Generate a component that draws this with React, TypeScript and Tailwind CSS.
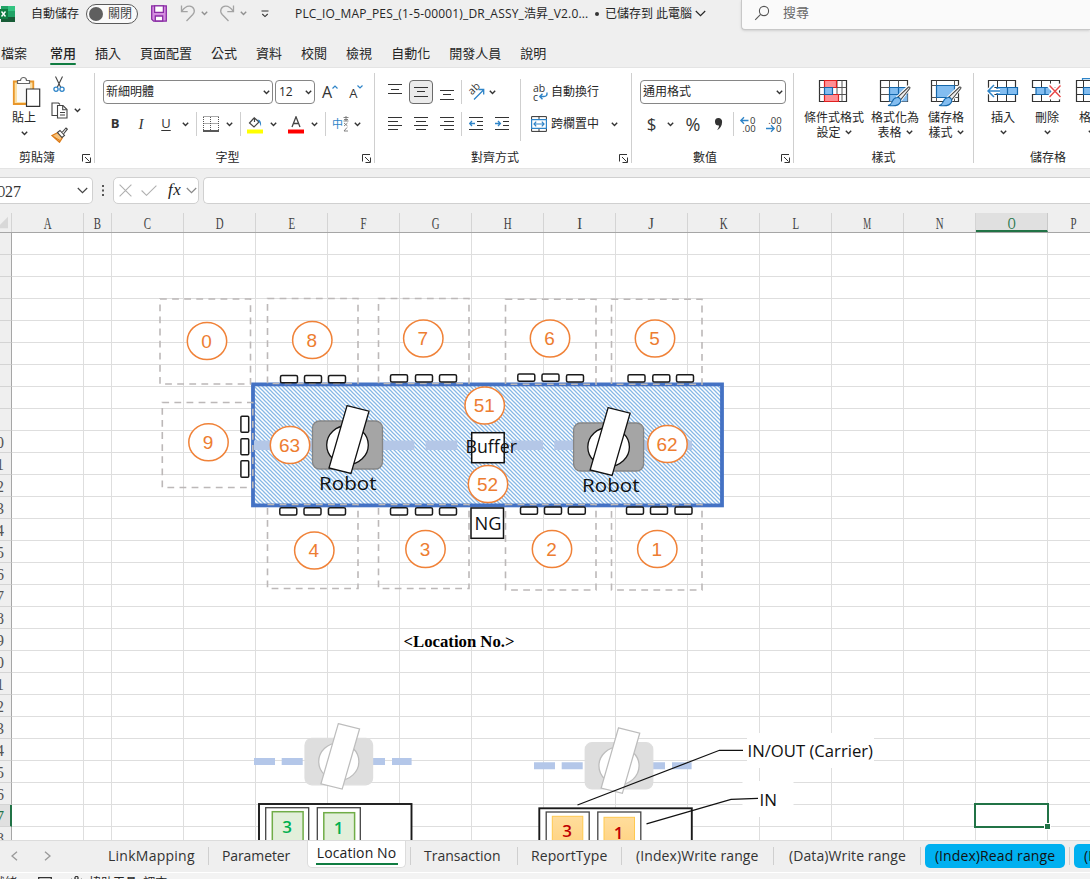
import React from "react";

type P = { className?: string };

const Chevron = ({ className = "" }: P) => (
  <svg className={`h-[5px] w-[7px] shrink-0 ${className}`} viewBox="0 0 7 5" fill="none" stroke="#333" strokeWidth="1.4">
    <path d="M.8 .8 3.5 3.5 6.2 .8" />
  </svg>
);

const WideChevron = ({ className = "" }: P) => (
  <svg className={`h-[7px] w-[11px] shrink-0 ${className}`} viewBox="0 0 11 7" fill="none" stroke="currentColor" strokeWidth="1.2">
    <path d="M.8 1 5.5 5.7 10.2 1" />
  </svg>
);

const Launcher = ({ className = "" }: P) => (
  <svg className={`h-[9px] w-[9px] shrink-0 ${className}`} viewBox="0 0 9 9" fill="none" stroke="#333">
    <path d="M.5 7.5V.5H8M3 3l4.5 4.5M8.5 3.5v5H3.5" />
  </svg>
);

const Divider = ({ className = "" }: P) => <div className={`w-px shrink-0 bg-[#cfcfcf] ${className}`} />;

/* ---------- title bar ---------- */

function TitleBar() {
  return (
    <div className="flex h-[33px] shrink-0 items-start">
      <div className="flex h-[27px] w-[741px] shrink-0 items-center">
        <svg className="h-[16px] w-[16px] shrink-0" viewBox="0 0 16 16">
          <path d="M1 0h14v16H1z" fill="#21a366" />
          <path d="M8 0h7v5H8z" fill="#33c481" />
          <path d="M1 11h14v5H1z" fill="#185c37" />
          <path d="M1 6h7v5H1z" fill="#107c41" />
          <path d="M0 3h8v10H0z" fill="#107c41" />
          <path d="M1.5 5.5l4 5M5.5 5.5l-4 5" stroke="#fff" strokeWidth="1.4" />
        </svg>
        <span className="ml-[15px] w-[48px] shrink-0 text-[12px]">自動儲存</span>
        <div className="ml-[7px] flex h-[20px] w-[52px] shrink-0 items-center rounded-full border border-[#5a5a5a] bg-[#fafafa]">
          <span className="ml-[2px] h-[14px] w-[14px] shrink-0 rounded-full bg-[#5f5f5f]" />
          <span className="ml-[5px] text-[12px] leading-none whitespace-nowrap text-[#444]">關閉</span>
        </div>
        <svg className="ml-[13px] h-[17px] w-[16px] shrink-0" viewBox="0 0 16 17" fill="#d58ee0" stroke="#8a2da5" strokeWidth="1.3">
          <path d="M.7 .9h14.6v15.2H2.6L.7 14.2z" />
          <path d="M3.6 .9h8.8v6.4H3.6z" fill="#fff" />
          <path d="M4.3 16v-5h7.4v5z" fill="#fff" />
        </svg>
        <svg className="ml-[13px] h-[17px] w-[16px] shrink-0" viewBox="0 0 16 17" fill="none" stroke="#a3a3a3" strokeWidth="1.3">
          <path d="M1.5 .5v6.2h6.2M1.8 6.4C4 3 6.5 1 9.5 1.2c4.5.3 6.3 5 3.3 8.300L6.5 16" />
        </svg>
        <Chevron className="ml-[5px] opacity-50" />
        <svg className="ml-[11px] h-[17px] w-[16px] shrink-0" viewBox="0 0 16 17" fill="none" stroke="#a3a3a3" strokeWidth="1.3">
          <path d="M14.5 .5v6.2H8.3M14.2 6.4C12 3 9.5 1 6.5 1.200 2 1.500.2 6.200 3.200 9.500L9.500 16" />
        </svg>
        <Chevron className="ml-[5px] opacity-50" />
        <svg className="ml-[14px] h-[8px] w-[8px] shrink-0" viewBox="0 0 8 8" fill="none" stroke="#333" strokeWidth="1.1">
          <path d="M.5 1h7M1.300 4 4 6.600l2.700-2.600" />
        </svg>
        <span className="ml-[26px] w-[294px] shrink-0 text-[12px] tracking-[0.17px] whitespace-nowrap">PLC_IO_MAP_PES_(1-5-00001)_DR_ASSY_浩昇_V2.0...</span>
        <span className="ml-[6px] h-[4px] w-[4px] shrink-0 rounded-full bg-[#333]" />
        <span className="ml-[6px] w-[48px] shrink-0 text-[12px]">已儲存到</span>
        <span className="ml-[3px] w-[36px] shrink-0 text-[12px]">此電腦</span>
        <WideChevron className="ml-[3px]" />
      </div>
      <div className="flex h-[30px] grow items-center rounded-bl-[4px] border-b border-l border-[#c8c8c8] bg-[#fafafa] shadow-sm">
        <svg className="mt-[-3px] ml-[12px] h-[16px] w-[16px]" viewBox="0 0 16 16" fill="none" stroke="#555" strokeWidth="1.1">
          <circle cx="10" cy="6" r="4.600" />
          <path d="M6.600 9.300 1.200 14.800" />
        </svg>
        <span className="mt-[-3px] ml-[13px] text-[13px] text-[#666]">搜尋</span>
      </div>
    </div>
  );
}

/* ---------- ribbon tabs ---------- */

const ribbonTabs = ["插入", "頁面配置", "公式", "資料", "校閱", "檢視", "自動化", "開發人員", "說明"];

function RibbonTabs() {
  return (
    <div className="flex h-[34px] shrink-0 items-start gap-[19px] pt-[11px] text-[13px] leading-[18px]">
      <span className="ml-[1px]">檔案</span>
      <span className="ml-[4px] flex flex-col font-medium">
        常用
        <span className="mt-px h-[2px] rounded bg-[#107c41]" />
      </span>
      {ribbonTabs.map((t) => (
        <span key={t}>{t}</span>
      ))}
    </div>
  );
}

/* ---------- ribbon groups ---------- */

function GroupLabel({ label, launcher = true, pad = "" }: { label: string; launcher?: boolean; pad?: string }) {
  return (
    <div className="mt-auto flex h-[21px] items-center">
      <span className={`grow text-center text-[12px] leading-[16px] ${pad}`}>{label}</span>
      {launcher && <Launcher className="mt-[2px] mr-[3px]" />}
    </div>
  );
}

function ClipboardGroup() {
  return (
    <div className="flex h-[100px] w-[94px] shrink-0 flex-col">
      <div className="flex">
        <div className="ml-[12px] flex w-[29px] flex-col pt-[8px]">
          <svg className="h-[32px] w-[29px]" viewBox="0 0 29 32">
            <path d="M1.800 5.500h19.500V28H1.800z" fill="#fbe0a6" stroke="#e8962a" strokeWidth="1.800" />
            <path d="M5 8h13v18H5z" fill="#fafafa" />
            <path d="M5.500 7.500V4.500h3a3 3 0 0 1 6 0h3v3z" fill="#fff" stroke="#666" strokeWidth="1.200" />
            <path d="M14.500 13h13.200v17.300H14.500z" fill="#fff" stroke="#333" strokeWidth="1.200" />
          </svg>
          <span className="mt-[2px] text-[12px] leading-[16px]">貼上</span>
          <Chevron className="mt-[5px] ml-[9px]" />
        </div>
        <div className="ml-[9px] flex w-[18px] flex-col items-center pt-[8px]">
          <svg className="h-[17px] w-[12px]" viewBox="0 0 12 17" fill="none">
            <path d="M2.500 .5 7.800 11.500M9.500 .5 4.200 11.500" stroke="#444" strokeWidth="1.100" />
            <circle cx="3" cy="13.300" r="2.100" stroke="#2e84c8" strokeWidth="1.300" />
            <circle cx="9" cy="13.300" r="2.100" stroke="#2e84c8" strokeWidth="1.300" />
          </svg>
          <svg className="mt-[9px] h-[17px] w-[17px]" viewBox="0 0 17 17" fill="#fff" stroke="#444" strokeWidth="1.100">
            <path d="M6 13.500H1V1h6.500l1.500 1.500" />
            <path d="M6.500 3.500h5.500l4 4V16H6.500z" />
            <path d="M11.700 3.700v4h4M9 10.500h5M9 13h5" fill="none" />
          </svg>
          <svg className="mt-[8px] h-[16px] w-[17px]" viewBox="0 0 17 16">
            <path d="M1 8.500 7 5.500l4.500 5L8.500 15.300z" fill="#f7c27a" stroke="#dc7a17" strokeWidth="1.200" />
            <path d="M3 10l6 3.500" stroke="#dc7a17" />
            <path d="M6.500 5.500 9 3.500l4.500 5-2.500 2z" fill="#fff" stroke="#444" strokeWidth="1.100" />
            <path d="M11 5.500 15 1l1.300 1.200L12.500 7" fill="#fff" stroke="#444" strokeWidth="1.100" />
          </svg>
        </div>
        <Chevron className="mt-[40px] ml-[6px]" />
      </div>
      <GroupLabel label="剪貼簿" pad="pr-[8px]" />
    </div>
  );
}

function FontGroup() {
  return (
    <div className="flex h-[100px] w-[279px] shrink-0 flex-col">
      <div className="mt-[12px] flex h-[24px] items-center">
        <div className="ml-[8px] flex h-[24px] w-[170px] items-center rounded-[4px] border border-[#868686] px-[2px] text-[12px]">
          <span className="grow">新細明體</span>
          <Chevron />
        </div>
        <div className="ml-[2px] flex h-[24px] w-[40px] items-center rounded-[4px] border border-[#868686] pr-[2px] pl-[3px] text-[12px]">
          <span className="grow">12</span>
          <Chevron />
        </div>
        <span className="ml-[7px] text-[16px] leading-none text-[#333]">A</span>
        <svg className="mt-[-11px] h-[4px] w-[6px]" viewBox="0 0 6 4" fill="none" stroke="#2e84c8" strokeWidth="1.200">
          <path d="M.5 3.500 3 1l2.500 2.500" />
        </svg>
        <span className="mt-[2px] ml-[11px] text-[13px] leading-none text-[#333]">A</span>
        <svg className="mt-[-11px] h-[4px] w-[6px]" viewBox="0 0 6 4" fill="none" stroke="#2e84c8" strokeWidth="1.200">
          <path d="M.5 .5 3 3 5.500 .5" />
        </svg>
      </div>
      <div className="mt-[8px] flex h-[24px] items-center text-[#333]">
        <span className="ml-[13px] w-[14px] text-center text-[13px] font-bold">B</span>
        <span className="ml-[12px] w-[14px] text-center font-['Liberation_Serif'] text-[15px] italic">I</span>
        <span className="ml-[11px] w-[14px] text-center text-[13px] underline underline-offset-2">U</span>
        <Chevron className="ml-[9px]" />
        <Divider className="ml-[7px] h-[24px]" />
        <svg className="ml-[6px] h-[16px] w-[16px]" viewBox="0 0 16 16" fill="none" stroke="#555">
          <path d="M.5 .5h15M.5 7.500h15M.5 1v14M7.500 1v14M15.500 1v14" strokeDasharray="1 1" />
          <path d="M0 15h16" stroke="#222" strokeWidth="1.500" />
        </svg>
        <Chevron className="ml-[7px]" />
        <Divider className="ml-[7px] h-[24px]" />
        <svg className="mt-[2px] ml-[6px] h-[18px] w-[16px]" viewBox="0 0 16 18" fill="none">
          <path d="M7 2 2.500 7 7 11l5-5L7.500 2v4" stroke="#444" strokeWidth="1.200" />
          <path d="M10.500 3.500c3 0 4 3 3.500 7-1-2-1-3.500-2-4.500z" fill="#2e84c8" />
          <path d="M0 13.500h16v4H0z" fill="#ffff00" />
        </svg>
        <Chevron className="ml-[7px]" />
        <svg className="mt-[2px] ml-[11px] h-[18px] w-[16px]" viewBox="0 0 16 18">
          <path d="M4 11 8 .8l4 10.200M5.300 7.500h5.400" fill="none" stroke="#444" strokeWidth="1.300" />
          <path d="M0 13.500h16v4H0z" fill="#f00" />
        </svg>
        <Chevron className="ml-[7px]" />
        <Divider className="ml-[7px] h-[24px]" />
        <span className="ml-[6px] w-[11px] text-[11px] text-[#2e84c8]">中</span>
        <svg className="h-[16px] w-[6px]" viewBox="0 0 6 16" fill="none" stroke="#777" strokeWidth=".9">
          <path d="M.5 1.500h5M1 3.500h4M3 0v5M.5 5h5M1 7l3.500 3M4.500 7 1 10M4 11.500l-3 3.500h4" />
        </svg>
        <Chevron className="ml-[5px]" />
      </div>
      <GroupLabel label="字型" pad="pr-[2px]" />
    </div>
  );
}

const Lines = ({ d, className = "" }: { d: string; className?: string }) => (
  <svg className={`h-[16px] w-[14px] shrink-0 ${className}`} viewBox="0 0 14 16" fill="none" stroke="#333" strokeWidth="1.1">
    <path d={d} />
  </svg>
);

function AlignGroup() {
  return (
    <div className="flex h-[100px] w-[256px] shrink-0 flex-col">
      <div className="flex">
        <div className="flex w-[145px] flex-col pt-[12px]">
          <div className="flex h-[24px] items-center">
            <Lines className="ml-[13px]" d="M0 .5h14M3 5.500h8M0 9.500h14" />
            <div className="ml-[7px] flex h-[24px] w-[24px] items-center justify-center rounded-[4px] border border-[#6b6b6b] bg-[#ebebeb]">
              <Lines d="M0 3.500h14M3 7.500h8M0 12.500h14" />
            </div>
            <Lines className="ml-[7px]" d="M0 6.500h14M3 10.500h8M0 15.500h14" />
            <Divider className="ml-[7px] h-[24px]" />
            <svg className="ml-[6px] h-[17px] w-[17px] overflow-visible" viewBox="0 0 17 17" fill="none">
              <text x="4" y="11.500" transform="rotate(-45 4 11.500)" fontSize="10.500" fontFamily="Open Sans" fill="#333">ab</text>
              <path d="M6 15.500 15.500 6M10.500 5.500h5.200v5" stroke="#2e84c8" strokeWidth="1.300" />
            </svg>
            <Chevron className="ml-[4px]" />
          </div>
          <div className="mt-[8px] flex h-[24px] items-center">
            <Lines className="ml-[13px]" d="M0 1.500h14M0 5.500h10M0 9.500h14M0 13.500h10" />
            <Lines className="ml-[12px]" d="M0 1.500h14M2 5.500h10M0 9.500h14M2 13.500h10" />
            <Lines className="ml-[12px]" d="M0 1.500h14M4 5.500h10M0 9.500h14M4 13.500h10" />
            <Divider className="ml-[7px] h-[24px]" />
            <svg className="ml-[7px] h-[16px] w-[14px]" viewBox="0 0 14 16" fill="none" strokeWidth="1.1">
              <path d="M0 1.500h14M8 5.500h6M8 9.500h6M0 13.500h14" stroke="#333" />
              <path d="M6 7.500H.8M3 5 .6 7.500 3 10" stroke="#2e84c8" strokeWidth="1.300" />
            </svg>
            <svg className="ml-[12px] h-[16px] w-[14px]" viewBox="0 0 14 16" fill="none" strokeWidth="1.1">
              <path d="M0 1.500h14M8 5.500h6M8 9.500h6M0 13.500h14" stroke="#333" />
              <path d="M0 7.500h5.200M3 5l2.400 2.500L3 10" stroke="#2e84c8" strokeWidth="1.300" />
            </svg>
          </div>
        </div>
        <Divider className="mt-[11px] h-[62px]" />
        <div className="flex flex-col pt-[12px]">
          <div className="flex h-[24px] items-center">
            <svg className="ml-[12px] h-[17px] w-[15px] overflow-visible" viewBox="0 0 15 17" fill="none">
              <text x="0" y="8" fontSize="10.500" fontFamily="Open Sans" fill="#333">ab</text>
              <text x="0" y="16.500" fontSize="10.500" fontFamily="Open Sans" fill="#333">c</text>
              <path d="M14 8.500c.3 3-1 4-3 4H7M9.500 9.800 6.800 12.500l2.700 2.700" stroke="#2e84c8" strokeWidth="1.400" />
            </svg>
            <span className="ml-[3px] text-[12px]">自動換行</span>
          </div>
          <div className="mt-[8px] flex h-[24px] items-center">
            <svg className="ml-[10px] h-[16px] w-[16px]" viewBox="0 0 16 16" fill="none" stroke="#333">
              <path d="M.6 .6h14.800v14.800H.6zM8 .6v3M8 12.500v3" />
              <path d="M.6 3.700h14.800v8.600H.6z" stroke="#2e84c8" fill="#fff" strokeWidth="1.200" />
              <path d="M3 8h10M5.200 5.700 3 8l2.200 2.300M10.800 5.700 13 8l-2.200 2.300" stroke="#2e84c8" strokeWidth="1.200" />
            </svg>
            <span className="ml-[4px] w-[48px] text-[12px]">跨欄置中</span>
            <Chevron className="ml-[12px]" />
          </div>
        </div>
      </div>
      <GroupLabel label="對齊方式" pad="pr-[4px]" />
    </div>
  );
}

function NumberGroup() {
  return (
    <div className="flex h-[100px] w-[161px] shrink-0 flex-col">
      <div className="mt-[12px] ml-[8px] flex h-[24px] w-[146px] items-center rounded-[4px] border border-[#868686] px-[2px] text-[12px]">
        <span className="grow">通用格式</span>
        <Chevron />
      </div>
      <div className="mt-[8px] flex h-[24px] items-center text-[#333]">
        <span className="ml-[14px] w-[11px] text-center text-[17px]">$</span>
        <Chevron className="ml-[10px]" />
        <span className="ml-[10px] w-[18px] text-center text-[18px]">%</span>
        <svg className="ml-[12px] h-[14px] w-[9px]" viewBox="0 0 9 14" fill="#333">
          <path d="M4.500 1a3.600 3.600 0 0 1 3.600 4c0 3.800-2.100 6.800-5.300 8.300 1.300-1.500 2.200-3.200 2.200-4.800A3.700 3.700 0 1 1 4.500 1z" />
        </svg>
        <Divider className="ml-[10px] h-[24px]" />
        <svg className="ml-[6px] h-[17px] w-[16px] overflow-visible" viewBox="0 0 16 17" fill="none">
          <text x="10" y="7.500" fontSize="9.500" fontFamily="Open Sans" fill="#333">0</text>
          <text x="2.300" y="16" fontSize="9.500" fontFamily="Open Sans" fill="#333">.00</text>
          <path d="M8.500 4.500H.8M4 1.300.8 4.500 4 7.700" stroke="#2e84c8" strokeWidth="1.300" />
        </svg>
        <svg className="ml-[10px] h-[17px] w-[16px] overflow-visible" viewBox="0 0 16 17" fill="none">
          <text x="2.300" y="7.500" fontSize="9.500" fontFamily="Open Sans" fill="#333">.00</text>
          <text x="10" y="16" fontSize="9.500" fontFamily="Open Sans" fill="#333">0</text>
          <path d="M0 12.500h8M5 9.300l3.200 3.200L5 15.700" stroke="#2e84c8" strokeWidth="1.300" />
        </svg>
      </div>
      <GroupLabel label="數值" pad="pr-[3px]" />
    </div>
  );
}

const Table = ({ children }: { children?: React.ReactNode }) => (
  <svg className="h-[30px] w-[32px]" viewBox="0 0 32 30" fill="none">
    <path d="M1.500 2.500h27v21h-27z" fill="#fff" stroke="#333" strokeWidth="1.200" />
    {children}
  </svg>
);

const Brush = () => (
  <g>
    <path d="M29.500 8.500c1.300-.3 1.800.5 1.200 1.500L21.500 22l-3-2.600z" fill="#fff" stroke="#fff" strokeWidth="3" />
    <path d="M29.500 9c1.300-.3 1.800.5 1.200 1.500L21.500 22l-3-2.600z" fill="#eee" stroke="#444" strokeWidth="1.100" />
    <path d="M18 19.500c2-.5 4.500 1.500 3.500 4.500-1 2.700-5 4.500-12.500 3.500 3.500-.5 3.500-2.500 4.500-4.500.8-1.900 2.500-3.300 4.500-3.500z" fill="#83bdf0" stroke="#1467ab" strokeWidth="1.100" />
  </g>
);

function BigButton({ icon, lines, className = "" }: { icon: React.ReactNode; lines: string[]; className?: string }) {
  return (
    <div className={`flex shrink-0 flex-col items-center pt-[10px] ${className}`}>
      {icon}
      <span className="mt-[2px] text-[12px] leading-[15px] whitespace-nowrap">{lines[0]}</span>
      {lines[1] ? (
        <span className="flex items-center gap-[4px] text-[12px] leading-[15px] whitespace-nowrap">
          {lines[1]}
          <Chevron />
        </span>
      ) : (
        <Chevron className="mt-[5px]" />
      )}
    </div>
  );
}

function StylesGroup() {
  return (
    <div className="flex h-[100px] w-[179px] shrink-0 flex-col">
      <div className="flex">
        <BigButton
          className="ml-[10px] w-[60px]"
          lines={["條件式格式", "設定"]}
          icon={
            <Table>
              <path d="M1.500 9.500h27M1.500 16.500h27M6.500 2.500v21M19 2.500v21M24 2.500v21" stroke="#555" />
              <path d="M6.500 2.500h12v7h-12zM6.500 16.500h14v7h-14z" fill="#ff8f94" stroke="#e02020" strokeWidth="1.200" />
              <path d="M6.500 9.500h8v7h-8z" fill="#83bdf0" stroke="#1467ab" strokeWidth="1.200" />
            </Table>
          }
        />
        <BigButton
          className="ml-[7px] w-[48px]"
          lines={["格式化為", "表格"]}
          icon={
            <Table>
              <path d="M10.500 9.500h18v14h-18z" fill="#83bdf0" />
              <path d="M1.500 9.500h9M1.500 16.500h9M10.500 2.500v7M19.500 2.500v7" stroke="#555" />
              <path d="M10.500 23.500v-14h18M10.500 16.500h18M19.500 9.500v14" stroke="#1467ab" strokeWidth="1.200" />
              <Brush />
            </Table>
          }
        />
        <BigButton
          className="ml-[4px] w-[46px]"
          lines={["儲存格", "樣式"]}
          icon={
            <Table>
              <path d="M1.500 7.500h27M1.500 19.500h27M6.500 2.500v21M24.500 2.500v21" stroke="#555" />
              <path d="M6.500 7.500h18v12h-18z" fill="#83bdf0" stroke="#1467ab" strokeWidth="1.200" />
              <Brush />
            </Table>
          }
        />
      </div>
      <GroupLabel label="樣式" launcher={false} />
    </div>
  );
}

function CellsGroup() {
  return (
    <div className="flex h-[100px] w-[148px] shrink-0 flex-col">
      <div className="flex">
        <BigButton
          className="ml-[13px] w-[32px]"
          lines={["插入"]}
          icon={
            <Table>
              <path d="M1.500 9.500h27M1.500 16.500h27M10.500 2.500v21M19.500 2.500v21" stroke="#333" />
              <path d="M10 9.500h20.500v7H10zM20.500 9.500v7" fill="#83bdf0" stroke="#1467ab" strokeWidth="1.200" />
              <path d="M13 13H1M7 7l-6 6 6 6" stroke="#fff" strokeWidth="4" />
              <path d="M13 13H.8M7 7l-6 6 6 6" stroke="#2e84c8" strokeWidth="1.500" />
            </Table>
          }
        />
        <BigButton
          className="ml-[12px] w-[32px]"
          lines={["刪除"]}
          icon={
            <Table>
              <path d="M1.500 9.500h27M1.500 16.500h27M10.500 2.500v21M19.500 2.500v21" stroke="#333" />
              <path d="M0 10h4v6H0z" fill="#fff" />
              <path d="M5 9.500h15v7H5zM14 9.500v7" fill="#83bdf0" stroke="#1467ab" strokeWidth="1.200" />
              <path d="M18 7l12 13M30 7 18 20" stroke="#fff" strokeWidth="5" />
              <path d="M18.500 7.500 29.500 19M29.500 7.500 18.500 19" stroke="#e84848" strokeWidth="1.400" />
            </Table>
          }
        />
        <BigButton
          className="ml-[12px] w-[32px]"
          lines={["格式"]}
          icon={
            <Table>
              <path d="M1.500 9.500h27M1.500 16.500h27M8.500 2.500v21M19.500 2.500v21" stroke="#333" />
              <path d="M8.500 9.500h11v7h-11z" fill="#83bdf0" stroke="#1467ab" strokeWidth="1.200" />
              <path d="M7.500 0v2M8 .6h14" stroke="#2e84c8" strokeWidth="1.200" />
            </Table>
          }
        />
      </div>
      <GroupLabel label="儲存格" launcher={false} />
    </div>
  );
}

function Ribbon() {
  return (
    <div className="flex h-[102px] shrink-0 overflow-hidden border-t border-b border-[#e4e4e4] bg-white">
      <ClipboardGroup />
      <Divider className="mt-[5px] h-[90px]" />
      <FontGroup />
      <Divider className="mt-[5px] h-[90px]" />
      <AlignGroup />
      <Divider className="mt-[5px] h-[90px]" />
      <NumberGroup />
      <Divider className="mt-[5px] h-[90px]" />
      <StylesGroup />
      <Divider className="mt-[5px] h-[90px]" />
      <CellsGroup />
    </div>
  );
}

/* ---------- formula bar ---------- */

function FormulaBar() {
  return (
    <div className="flex h-[44px] shrink-0 items-start pt-[8px]">
      <div className="flex h-[27px] w-[93px] shrink-0 items-center rounded-r-[5px] border-y border-r border-[#d0d0d0] bg-white">
        <span className="mt-[2px] ml-[-3px] inline-block w-[8px] shrink-0 origin-left scale-x-[0.7] font-['Liberation_Serif'] text-[16px] text-[#333]">O</span>
        <span className="mt-[2px] grow font-['Liberation_Serif'] text-[16px] text-[#333]">27</span>
        <WideChevron className="mr-[4px] text-[#444]" />
      </div>
      <svg className="mt-[8px] ml-[8px] h-[12px] w-[4px] shrink-0" viewBox="0 0 4 12" fill="#555">
        <path d="M1 0h2v2H1zM1 4.500h2v2H1zM1 9h2v2H1z" />
      </svg>
      <div className="ml-[8px] flex h-[27px] w-[86px] shrink-0 items-center rounded-[5px] border border-[#d0d0d0] bg-white">
        <svg className="ml-[5px] h-[13px] w-[13px]" viewBox="0 0 13 13" stroke="#b0b0b0" strokeWidth="1.100">
          <path d="M.6 .6l11.800 11.800M12.400 .6.6 12.400" />
        </svg>
        <svg className="ml-[9px] h-[11px] w-[16px]" viewBox="0 0 16 11" stroke="#b0b0b0" strokeWidth="1.100" fill="none">
          <path d="M.6 5.500 5.500 10.300 15.400 .6" />
        </svg>
        <span className="mt-[-2px] ml-[11px] w-[14px] font-['Liberation_Serif'] text-[17px] leading-none tracking-[0.5px] text-[#222] italic">fx</span>
        <WideChevron className="ml-[4px] text-[#888]" />
      </div>
      <div className="ml-[4px] h-[27px] grow rounded-l-[5px] border-y border-l border-[#d0d0d0] bg-white" />
    </div>
  );
}

/* ---------- sheet ---------- */

const columns = ["A", "B", "C", "D", "E", "F", "G", "H", "I", "J", "K", "L", "M", "N", "O", "P"];
const rows = Array.from({ length: 28 }, (_, i) => i + 1);

const columnWidth = (c: string) => (c === "B" ? "w-[28px]" : c === "P" ? "w-[51px]" : "w-[72px]");

function ColumnHeaders() {
  return (
    <div className="flex h-[20px] shrink-0 overflow-hidden border-b border-[#a6a6a6]">
      <div className="flex w-[12px] shrink-0 items-end justify-end border-r border-[#d4d4d4]">
        <svg className="mr-[3px] mb-[3px] h-[13px] w-[9px]" viewBox="0 0 9 13" fill="#d8d8d8">
          <path d="M9 0v13H0V9z" />
        </svg>
      </div>
      {columns.map((c) => (
        <div
          key={c}
          className={`flex shrink-0 justify-center border-r font-['Liberation_Serif'] text-[16px] leading-[22px] ${columnWidth(c)} ${
            c === "O" ? "border-b-2 border-r-[#c9c9c9] border-b-[#217346] bg-[#e0e0e0] text-[#217346]" : "border-r-[#d4d4d4] text-[#444]"
          }`}
        >
          <span className={`inline-block ${c === "M" ? "scale-x-[0.55]" : c === "I" || c === "J" ? "scale-x-[0.9]" : "scale-x-[0.68]"}`}>{c}</span>
        </div>
      ))}
    </div>
  );
}

function Grid() {
  return (
    <div className="flex h-[607px] shrink-0 flex-col overflow-hidden bg-white">
      {rows.map((r) => (
        <div key={r} className="flex h-[22px] shrink-0">
          <div
            className={`flex w-[12px] shrink-0 items-center justify-end overflow-hidden border-b border-b-[#d4d4d4] font-['Liberation_Serif'] text-[16px] leading-none ${
              r === 27 ? "border-r-2 border-r-[#217346] bg-[#e0e0e0] pr-[6px] text-[#217346]" : "border-r border-r-[#a6a6a6] bg-[#efefef] pr-[7px] text-[#555]"
            }`}
          >
            {r > 9 && <span className="mt-[3px]">{r}</span>}
          </div>
          {columns.map((c) => (
            <div key={c} className={`shrink-0 border-r border-b border-[#dedede] ${columnWidth(c)}`} />
          ))}
        </div>
      ))}
    </div>
  );
}

/* ---------- drawing objects on the sheet ---------- */

const stations: [string, number, number][] = [
  ["0", 207, 341], ["8", 312.3, 340], ["7", 423.3, 338.5], ["6", 550, 338.5], ["5", 655, 338.5],
  ["9", 208.5, 442.3], ["63", 290, 445], ["51", 484.7, 405.5], ["52", 488, 484], ["62", 667.5, 444],
  ["4", 314.3, 550.5], ["3", 425.5, 549], ["2", 552, 549], ["1", 657.3, 549],
];

const zones: [number, number, number][] = [
  [160, 299, 85], [267.5, 298.5, 85], [378.5, 298.5, 85], [505.5, 299.3, 85], [611.5, 299.3, 85],
  [162.3, 402.5, 85], [267.5, 504.5, 84], [378.5, 504.5, 84], [505.5, 504.5, 85.5], [611.5, 504.5, 85.5],
];

const slots: [number, number][] = [
  [280.5, 375.5], [304.5, 375.5], [328.5, 375.5], [390.5, 374.8], [415.5, 374.8], [439.5, 374.8],
  [517.8, 374], [542, 374], [566.5, 374.8], [628, 374.8], [652.8, 374.8], [676.5, 374.8],
  [279.8, 507.8], [304, 507.8], [328.5, 507.8], [390.5, 507.8], [415.5, 507.8], [439.5, 507.8],
  [520.5, 507], [544.5, 507], [568.3, 507], [626.5, 507], [650.5, 507], [675, 507],
];

function Robot({ x, y, body, line, bodyStroke }: { x: number; y: number; body: string; line: string; bodyStroke: string }) {
  return (
    <g transform={`translate(${x} ${y})`} strokeWidth="1.300">
      <rect x="-35" y="-24" width="70" height="48" rx="7" fill={body} stroke={bodyStroke} />
      <ellipse rx="20.800" ry="19.500" fill="#fff" stroke={line} />
      <path d="M-.5-39.300 21.500-33.800 3.500 28.500-18.500 23z" fill="#fff" stroke={line} />
    </g>
  );
}

function Drawing() {
  return (
    <svg className="pointer-events-none absolute top-0 left-0 h-[607px] w-[1090px]" viewBox="0 233 1090 607" fontFamily="'Open Sans', sans-serif">
      <defs>
        <pattern id="hatch" width="4" height="4" patternUnits="userSpaceOnUse">
          <rect width="4" height="4" fill="#fff" />
          <path d="M-1-1 5 5M-1 3 1 5M3-1 5 1" stroke="#86b7e6" strokeWidth="1.250" />
        </pattern>
        <linearGradient id="amber" x1="0" y1="0" x2="0" y2="1">
          <stop offset="0" stopColor="#ffdd9c" />
          <stop offset="1" stopColor="#ffcf78" />
        </linearGradient>
      </defs>

      <rect x="253" y="384.400" width="469" height="121" fill="url(#hatch)" stroke="#4472c4" strokeWidth="3.800" />
      <path d="M254 445.200H692" stroke="#b4c7e7" strokeWidth="9.500" strokeDasharray="31.700 11.200" />
      <g fill="none" stroke="#bcb8b8" strokeWidth="1.600" strokeDasharray="6.800 5.300">
        {zones.map(([x, y, h], i) => (
          <rect key={i} x={x} y={y} width="90.500" height={h} />
        ))}
      </g>
      <g fill="#fff" stroke="#1a1a1a" strokeWidth="1.500">
        {slots.map(([x, y], i) => (
          <rect key={i} x={x} y={y} width="17" height="7.300" rx="1.500" />
        ))}
        <rect x="240.900" y="416.300" width="7.800" height="16" rx="1" />
        <rect x="240.900" y="438.800" width="7.800" height="16" rx="1" />
        <rect x="240.900" y="460.800" width="7.800" height="16.500" rx="1" />
      </g>

      <Robot x={347.5} y={445} body="#a5a5a5" line="#111" bodyStroke="#858585" />
      <Robot x={608.6} y={447} body="#a5a5a5" line="#111" bodyStroke="#858585" />
      <g fill="#111" fontSize="19">
        <text x="319" y="489.500" textLength="57.500" lengthAdjust="spacingAndGlyphs">Robot</text>
        <text x="582" y="491.800" textLength="57.500" lengthAdjust="spacingAndGlyphs">Robot</text>
      </g>

      <g fill="#fff" stroke="#111" strokeWidth="1.500">
        <rect x="471.700" y="432.700" width="32.500" height="30" />
        <rect x="471" y="508" width="32.500" height="30.300" />
      </g>
      <g fontSize="17.500" fill="#111">
        <text x="465.500" y="453" textLength="51.500" lengthAdjust="spacingAndGlyphs">Buffer</text>
        <text x="474.500" y="529.500" textLength="27" lengthAdjust="spacingAndGlyphs">NG</text>
      </g>

      <g fontFamily="'Liberation Sans', sans-serif" fontSize="19" textAnchor="middle">
        {stations.map(([n, x, y]) => (
          <g key={n}>
            <ellipse cx={x} cy={y} rx="19.700" ry="18.500" fill="#fff" stroke="#f08238" strokeWidth="1.500" />
            <text x={x - 0.5} y={y + 6.8} fill="#ed7d31">{n}</text>
          </g>
        ))}
      </g>

      <text x="403.500" y="646.500" fontFamily="'Liberation Serif', serif" fontWeight="700" fontSize="16" fill="#000" textLength="111" lengthAdjust="spacingAndGlyphs">{"<Location No.>"}</text>

      <g fill="#b4c7e9">
        <path d="M254 758h21v7h-21zM281.700 758h21v7h-21zM371 758h14v7h-14zM392 758h19.600v7H392z" />
        <path d="M534 762.300h21v7h-21zM561.700 762.300h21v7h-21zM651 762.300h14v7h-14zM672 762.300h19.600v7H672z" />
      </g>
      <g transform="translate(338.800 761.600) scale(.965)">
        <Robot x={0} y={0} body="#dedede" line="#bdbdbd" bodyStroke="#dedede" />
      </g>
      <g transform="translate(619 765.800) scale(.965)">
        <Robot x={0} y={0} body="#dedede" line="#bdbdbd" bodyStroke="#dedede" />
      </g>

      <g fill="#fff" stroke="#1a1a1a" strokeWidth="1.900">
        <rect x="259" y="804" width="152.500" height="50" />
        <rect x="539.300" y="808.300" width="152.500" height="50" />
      </g>
      <g fill="#fff" stroke="#444" strokeWidth="1.300">
        <rect x="265.700" y="807.700" width="43" height="50" />
        <rect x="317.300" y="807.700" width="43" height="50" />
        <rect x="546.200" y="812" width="43" height="50" />
        <rect x="597.800" y="812" width="43" height="50" />
      </g>
      <g fill="#e2efda" stroke="#70ad47" strokeWidth="1.500">
        <rect x="272.300" y="811.700" width="30.800" height="50" />
        <rect x="323.800" y="812.700" width="30.800" height="50" />
      </g>
      <g fill="url(#amber)" stroke="#ffc94f" strokeWidth="1">
        <rect x="552.300" y="816.300" width="30.500" height="40" />
        <rect x="604" y="817.300" width="30.500" height="40" />
      </g>
      <g fontSize="17" fontWeight="600" textAnchor="middle">
        <text x="287.200" y="833" fill="#00b050">3</text>
        <text x="338.700" y="834.300" fill="#00b050">1</text>
        <text x="567.200" y="837.300" fill="#c00000">3</text>
        <text x="618.700" y="838.500" fill="#c00000">1</text>
      </g>

      <path d="M747 733h127v35H747zM742.500 781h51v36h-51z" fill="#fff" />
      <path d="M577.500 805 719.500 750.300H743M646.500 823.800 731 799.300 758 798.300" fill="none" stroke="#111" strokeWidth="1.200" />
      <g fontSize="17" fill="#111">
        <text x="747.500" y="757" textLength="125.500" lengthAdjust="spacingAndGlyphs">IN/OUT (Carrier)</text>
        <text x="759.500" y="805.800" textLength="17.500" lengthAdjust="spacingAndGlyphs">IN</text>
      </g>

      <rect x="975" y="804" width="73" height="23" fill="none" stroke="#217346" strokeWidth="2" />
      <rect x="1044.500" y="823.500" width="6" height="6" fill="#217346" stroke="#fff" />
    </svg>
  );
}

/* ---------- sheet tabs and status bar ---------- */

function SheetTabs() {
  return (
    <div className="flex h-[32px] shrink-0 items-start overflow-hidden border-t border-[#dcdcdc] font-['Open_Sans'] text-[14px] leading-[30px] tracking-[0.1px] whitespace-nowrap text-[#333]">
      <svg className="mt-[10px] ml-[11px] h-[10px] w-[7px] shrink-0" viewBox="0 0 7 10" fill="none" stroke="#999" strokeWidth="1.300"><path d="M6 .7 1 5l5 4.300" /></svg>
      <svg className="mt-[10px] ml-[26px] h-[10px] w-[7px] shrink-0" viewBox="0 0 7 10" fill="none" stroke="#999" strokeWidth="1.300"><path d="M1 .7 6 5 1 9.300" /></svg>
      <span className="ml-[57px] w-[100px] shrink-0 tracking-[0.25px]">LinkMapping</span>
      <Divider className="mt-[6px] h-[18px]" />
      <span className="ml-[13px] w-[85px] shrink-0 tracking-[-0.1px]">Parameter</span>
      <div className="mt-[-1px] flex h-[28px] w-[99px] shrink-0 flex-col items-center rounded-b-[5px] border border-t-0 border-[#dcdcdc] bg-white">
        <span className="h-[23px] leading-[26px] text-[#222]">Location No</span>
        <span className="h-[2px] w-[82px] bg-[#107c41]" />
      </div>
      <Divider className="mt-[6px] ml-[4px] h-[18px]" />
      <span className="ml-[13px] w-[93px] shrink-0 tracking-normal">Transaction</span>
      <Divider className="mt-[6px] h-[18px]" />
      <span className="ml-[13px] w-[90px] shrink-0">ReportType</span>
      <Divider className="mt-[6px] h-[18px]" />
      <span className="ml-[14px] w-[137px] shrink-0">(Index)Write range</span>
      <Divider className="mt-[6px] h-[18px]" />
      <span className="ml-[15px] w-[131px] shrink-0">(Data)Write range</span>
      <Divider className="mt-[6px] h-[18px]" />
      <span className="mt-[3px] ml-[4px] h-[24px] w-[140px] shrink-0 rounded-[5px] bg-[#00b0f0] text-center leading-[24px] text-[#111]">(Index)Read range</span>
      <Divider className="mt-[6px] ml-[4px] h-[18px]" />
      <span className="mt-[3px] ml-[4px] h-[24px] w-[140px] shrink-0 rounded-[5px] bg-[#00b0f0] pl-[10px] leading-[24px] text-[#111]">(Data)Read range</span>
    </div>
  );
}

function StatusBar() {
  return (
    <div className="flex h-[7px] shrink-0 items-start overflow-hidden border-t border-white bg-[#f3f3f3] pt-[3px] text-[12px] leading-[14px] whitespace-nowrap">
      <span className="ml-[-7px] w-[24px] shrink-0">就緒</span>
      <svg className="mt-[1px] ml-[21px] h-[10px] w-[14px] shrink-0" viewBox="0 0 14 10" fill="none" stroke="#333" strokeWidth="1.300"><path d="M.7 .7h12.600v8.600H.7z" /></svg>
      <svg className="ml-[18px] h-[12px] w-[13px] shrink-0" viewBox="0 0 13 12" fill="none" stroke="#333" strokeWidth="1.200"><circle cx="6.500" cy="2" r="1.600" /><path d="M1 3l4 2v3l-2 4M12 3 8 5v3l2 4" /></svg>
      <span className="ml-[6px]">協助工具: 調查</span>
    </div>
  );
}

export default function App() {
  return (
    <div className="flex h-[879px] w-[1090px] flex-col overflow-hidden bg-[#efefef] font-['Open_Sans','Noto_Sans_CJK_TC',sans-serif] text-[#262626]">
      <TitleBar />
      <RibbonTabs />
      <Ribbon />
      <FormulaBar />
      <ColumnHeaders />
      <div className="relative shrink-0">
        <Grid />
        <Drawing />
      </div>
      <SheetTabs />
      <StatusBar />
    </div>
  );
}
